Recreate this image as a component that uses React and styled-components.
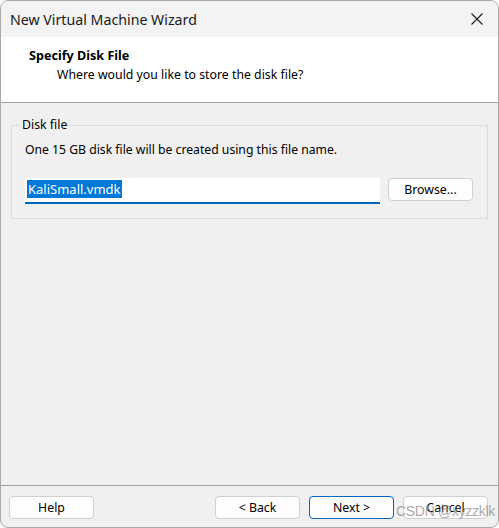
import React from "react";
import styled, { createGlobalStyle } from "styled-components";

const Global = createGlobalStyle`
  html, body { margin: 0; padding: 0; background: #ffffff; }
  body { font-family: "Noto Sans", "Liberation Sans", sans-serif; }
  * { box-sizing: border-box; }
`;

const Window = styled.div`
  position: relative;
  width: 499px;
  height: 528px;
  display: flex;
  flex-direction: column;
  border: 1px solid #a9a9a9;
  border-radius: 8px;
  overflow: hidden;
  background: #f0f0f0;
  color: #000;
  font-size: 12px;
`;

const TitleBar = styled.div`
  height: 36px;
  flex: none;
  display: flex;
  align-items: center;
  justify-content: space-between;
  padding: 0 14px 0 9px;
  background: #f3f3f3;
  font-size: 14.2px;
  color: #1a1a1a;
`;

const CloseBtn = styled.div`
  width: 14px;
  height: 14px;
  display: flex;
  align-items: center;
  justify-content: center;
`;

const Header = styled.div`
  height: 66px;
  flex: none;
  background: #ffffff;
  border-bottom: 1px solid #a0a0a0;
  padding: 10px 0 0 28px;
`;

const HeaderTitle = styled.div`
  font-weight: 700;
  font-size: 12.6px;
  line-height: 18px;
`;

const HeaderSub = styled.div`
  margin: 1px 0 0 28px;
  font-size: 12.3px;
  line-height: 18px;
  color: #000;
`;

const Content = styled.div`
  flex: 1;
  padding: 15px 10px 0 10px;
`;

const GroupBox = styled.fieldset`
  margin: 0;
  height: 101px;
  border: 1px solid #dcdcdc;
  padding: 0 14px 0 13px;
  min-width: 0;
`;

const Legend = styled.legend`
  padding: 0 2px;
  margin-left: -5px;
  font-size: 12.3px;
  line-height: 14px;
`;

const Note = styled.div`
  margin-top: 10px;
  font-size: 12.2px;
  line-height: 16px;
`;

const FileRow = styled.div`
  display: flex;
  align-items: flex-start;
  gap: 8px;
  margin-top: 20px;
`;

const Input = styled.div`
  width: 355px;
  height: 26px;
  background: #ffffff;
  border-bottom: 2px solid #0067c0;
  padding: 3px 0 0 2px;
  font-size: 13px;
  line-height: 17px;
`;

const Selected = styled.span`
  background: #0078d7;
  color: #ffffff;
  padding: 0 1px;
`;

const Button = styled.button`
  width: 85px;
  height: 23px;
  padding: 0;
  background: #fdfdfd;
  border: 1px solid ${(p) => (p.$primary ? "#0067c0" : "#d0d0d0")};
  border-radius: 4px;
  font-family: inherit;
  font-size: 12.3px;
  color: #000;
  line-height: 19px;
`;

const Footer = styled.div`
  flex: none;
  height: 42px;
  border-top: 1px solid #a0a0a0;
  display: flex;
  align-items: flex-start;
  padding: 10px 10px 0 8px;
`;

const Spacer = styled.div`
  flex: 1;
`;

const ButtonGroup = styled.div`
  display: flex;
  gap: 9px;
`;

const Watermark = styled.div`
  position: absolute;
  left: 395px;
  top: 502px;
  white-space: nowrap;
  font-family: "Liberation Sans", sans-serif;
  font-size: 14px;
  color: rgba(140, 140, 140, 0.75);
  pointer-events: none;
  letter-spacing: -0.3px;
`;

export default function App() {
  return (
    <>
      <Global />
      <Window>
        <TitleBar>
          <span>New Virtual Machine Wizard</span>
          <CloseBtn>
            <svg width="12" height="12" viewBox="0 0 12 12">
              <path d="M0.5 0.5 L11.5 11.5 M11.5 0.5 L0.5 11.5" stroke="#1a1a1a" strokeWidth="1.1" />
            </svg>
          </CloseBtn>
        </TitleBar>
        <Header>
          <HeaderTitle>Specify Disk File</HeaderTitle>
          <HeaderSub>Where would you like to store the disk file?</HeaderSub>
        </Header>
        <Content>
          <GroupBox>
            <Legend>Disk file</Legend>
            <Note>One 15 GB disk file will be created using this file name.</Note>
            <FileRow>
              <Input>
                <Selected>KaliSmall.vmdk</Selected>
              </Input>
              <Button>Browse...</Button>
            </FileRow>
          </GroupBox>
        </Content>
        <Footer>
          <Button>Help</Button>
          <Spacer />
          <ButtonGroup>
            <Button>&lt; Back</Button>
            <Button $primary>Next &gt;</Button>
            <Button>Cancel</Button>
          </ButtonGroup>
        </Footer>
        <Watermark>CSDN @xyzzklk</Watermark>
      </Window>
    </>
  );
}
